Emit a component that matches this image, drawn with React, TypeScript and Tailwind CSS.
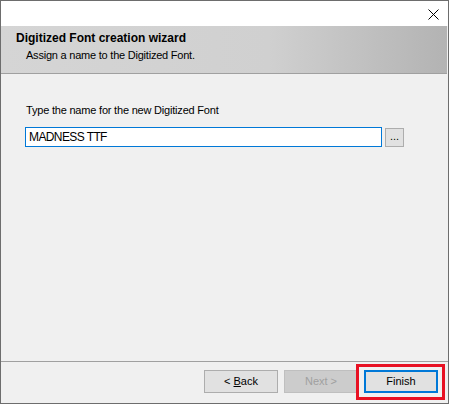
import React from 'react';

const font = { fontFamily: '"Liberation Sans", Arial, sans-serif' };

const WizardButton: React.FC<{ children: React.ReactNode; disabled?: boolean; primary?: boolean }> = ({
  children,
  disabled,
  primary,
}) => {
  const base = 'w-[74px] h-[23px] flex items-center justify-center text-[11px] leading-none';
  if (disabled) {
    return (
      <div className={`${base} bg-[#cccccc] border border-[#bfbfbf] text-[#a0a0a0]`}>
        <span>{children}</span>
      </div>
    );
  }
  if (primary) {
    return (
      <div className={`${base} bg-[#e1e1e1] border-2 border-[#0078d7] text-black`}>
        <span>{children}</span>
      </div>
    );
  }
  return (
    <div className={`${base} bg-[#e1e1e1] border border-[#adadad] text-black`}>
      <span>{children}</span>
    </div>
  );
};

export default function App() {
  return (
    <div
      className="w-[449px] h-[404px] border border-[#6d6d6d] bg-[#f0f0f0] flex flex-col overflow-hidden"
      style={font}
    >
      {/* title bar */}
      <div className="h-[25px] bg-white flex justify-end items-start pt-[8px] pr-[9px] shrink-0">
        <svg width="11" height="11" viewBox="0 0 11 11">
          <path d="M0.5 0.5 L10.5 10.5 M10.5 0.5 L0.5 10.5" stroke="#000" strokeWidth="1" fill="none" />
        </svg>
      </div>

      {/* header */}
      <div className="h-[48px] shrink-0 mr-px border-b border-[#a0a0a0] bg-[linear-gradient(to_right,#d5d5d5_0%,#d0d0d0_60%,#b3b3b3_100%)] pt-[5px] pl-[15px]">
        <div className="text-[12px] leading-[14px] font-bold text-black">Digitized Font creation wizard</div>
        <div className="mt-[4px] pl-[10px] text-[11px] leading-[13px] tracking-[-0.22px] text-black">
          Assign a name to the Digitized Font.
        </div>
      </div>

      {/* body */}
      <div className="flex-1 pt-[30px] pl-[24px]">
        <div className="pl-[1px] text-[11px] leading-[13px] tracking-[-0.2px] text-black">
          Type the name for the new Digitized Font
        </div>
        <div className="mt-[10px] flex items-center gap-[3px]">
          <div className="w-[357px] h-[20px] border border-[#0078d7] bg-white flex items-center pl-[3px] text-[12px] tracking-[-0.6px] text-black">
            MADNESS TTF
          </div>
          <div className="w-[19px] h-[19px] bg-[#e1e1e1] border border-[#adadad] flex items-end justify-center pb-[4px] text-[11px] leading-none text-black">
            ...
          </div>
        </div>
      </div>

      {/* footer */}
      <div className="h-[42px] shrink-0 border-t border-[#a0a0a0] flex justify-end items-start pt-[8px] pr-[10px]">
        <WizardButton>
          &lt;&nbsp;<span className="underline">B</span>ack
        </WizardButton>
        <div className="ml-[6px]">
          <WizardButton disabled>Next &gt;</WizardButton>
        </div>
        <div className="relative ml-[6px]">
          <WizardButton primary>Finish</WizardButton>
          <div className="absolute -top-[6px] -bottom-[7px] -left-[8px] -right-[7px] border-[3px] border-[#e81123] pointer-events-none" />
        </div>
      </div>
    </div>
  );
}
